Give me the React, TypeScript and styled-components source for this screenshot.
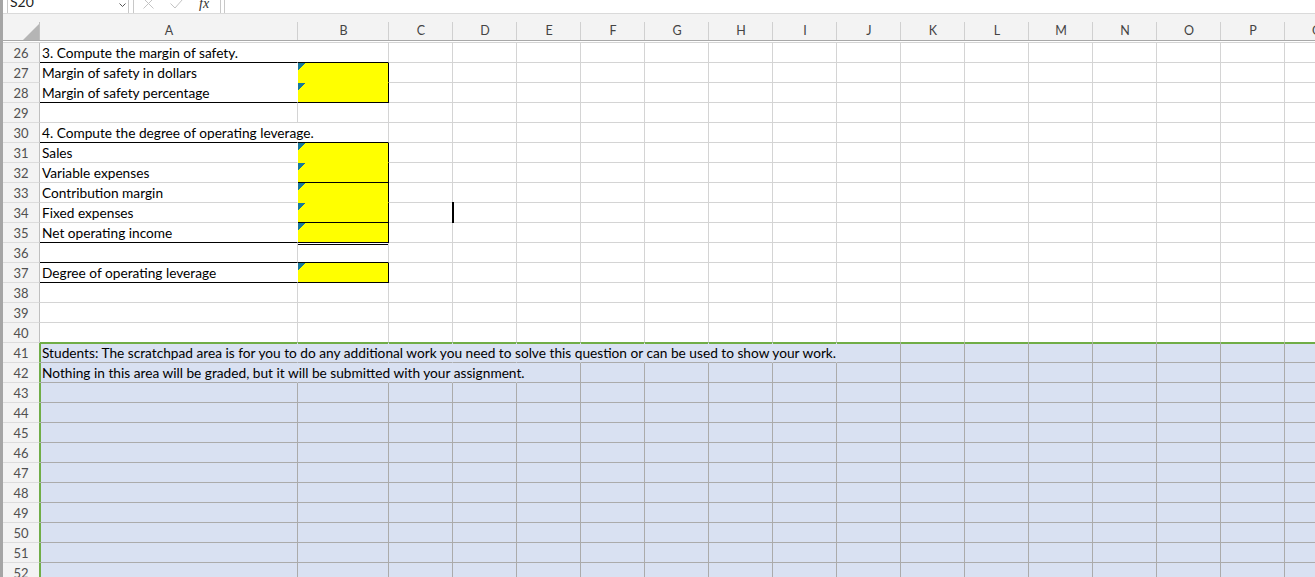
import React from 'react';
import styled, { createGlobalStyle, css } from 'styled-components';

const FONT = `Lato, "Liberation Sans", Arial, sans-serif`;

const C = {
  grid: '#d4d4d4',
  black: '#000000',
  scratch: '#ababab',
  green: '#70ad47',
  yellow: '#ffff00',
  blue: '#d9e1f2',
  white: '#ffffff',
  none: 'transparent',
  header: '#f3f3f3',
};

const GlobalStyle = createGlobalStyle`
  html, body { margin: 0; padding: 0; background: #ffffff; }
  body { font-family: ${FONT}; }
`;

const Window = styled.div`
  position: relative;
  width: 1315px;
  height: 577px;
  overflow: hidden;
  box-sizing: border-box;
  border-left: 3px solid #a5a5a5;
  background: #ffffff;
  font-family: ${FONT};
`;

/* ---------- formula bar ---------- */
const FormulaBar = styled.div`
  height: 14px;
  box-sizing: border-box;
  border-bottom: 1px solid #dadada;
  display: flex;
  align-items: flex-end;
  overflow: hidden;
`;

const BarBox = styled.div`
  height: 24px;
  flex: none;
  box-sizing: border-box;
  border: 1px solid #c8c8c8;
  border-bottom: none;
  display: flex;
`;

const NameBox = styled(BarBox)`
  margin-left: 4px;
  width: 122px;
  align-items: center;
  justify-content: space-between;
  padding: 0 2px 0 2px;
`;

const NameText = styled.span`
  font-size: 14px;
  line-height: 22px;
  color: #222222;
`;

const Chevron = styled.svg`
  margin-top: 6px;
`;

const FxButtons = styled(BarBox)`
  margin-left: 4px;
  width: 88px;
  align-items: flex-end;
  padding: 0 0 4px 9px;
  gap: 16px;
`;

const FxLabel = styled.span`
  font-family: "Liberation Serif", serif;
  font-style: italic;
  font-size: 14px;
  line-height: 12px;
  color: #333333;
  margin-bottom: -1px;
`;

const FormulaInput = styled(BarBox)`
  margin-left: 3px;
  flex: 1;
  border-right: none;
`;

/* ---------- column header ---------- */
const HeaderRow = styled.div`
  display: flex;
  height: 27px;
  box-sizing: border-box;
  background: ${C.header};
  border-bottom: 1px solid #a8a8a8;
`;

const Corner = styled.div`
  flex: none;
  width: 37px;
  height: 26px;
  box-sizing: border-box;
  display: flex;
  align-items: flex-end;
  justify-content: flex-end;
  padding-right: 1px;
  background: linear-gradient(#bfbfbf, #bfbfbf) right bottom / 1px 18px no-repeat;
`;

const ColHead = styled.div<{ $w: number }>`
  flex: none;
  width: ${(p) => p.$w}px;
  height: 26px;
  box-sizing: border-box;
  padding-top: 8px;
  text-align: center;
  font-size: 12.5px;
  line-height: 18px;
  color: #444444;
  background: linear-gradient(#d0d0d0, #d0d0d0) right bottom / 1px 18px no-repeat;
`;

const HeaderGap = styled.div`
  height: 2px;
  box-sizing: border-box;
  border-bottom: 1px solid ${C.grid};
`;

/* ---------- grid rows ---------- */
const Row = styled.div`
  display: flex;
  height: 20px;
`;

const RowHead = styled.div<{ $edge: string }>`
  flex: none;
  width: 37px;
  height: 20px;
  box-sizing: border-box;
  padding-top: 1px;
  background: ${C.header};
  border-right: 1px solid ${(p) => p.$edge};
  border-bottom: 1px solid #dcdcdc;
  text-align: center;
  font-size: 13px;
  line-height: 18px;
  color: #505050;
`;

type CellProps = {
  $w: number;
  $fill: string;
  $right: string;
  $bottom: string;
  $comment?: boolean;
  $doubleTop?: boolean;
  $greenTop?: boolean;
  $greenLeft?: boolean;
  $text?: boolean;
};

const Cell = styled.div<CellProps>`
  flex: none;
  width: ${(p) => p.$w}px;
  height: 20px;
  box-sizing: border-box;
  padding: 1px 0 0 2px;
  background-color: ${(p) => p.$fill};
  border-right: 1px solid ${(p) => p.$right};
  border-bottom: 1px solid ${(p) => p.$bottom};
  font-size: 13.7px;
  line-height: 18px;
  color: #000000;
  white-space: nowrap;
  ${(p) =>
    p.$text &&
    css`
      position: relative;
      z-index: 1;
    `}
  ${(p) =>
    p.$comment &&
    css`
      background-image: linear-gradient(135deg, #18799b 50%, transparent 50%);
      background-size: 8px 8px;
      background-repeat: no-repeat;
    `}
  ${(p) =>
    p.$doubleTop &&
    css`
      background-image: linear-gradient(
        to bottom,
        transparent 1px,
        #000000 1px,
        #000000 2px,
        transparent 2px
      );
    `}
  ${(p) => {
    const shadows: string[] = [];
    if (p.$greenTop) shadows.push(`inset 0 1px 0 ${C.green}`);
    if (p.$greenLeft) shadows.push(`inset 1px 0 0 ${C.green}`);
    return shadows.length ? css`box-shadow: ${shadows.join(', ')};` : '';
  }}
`;

const Cursor = styled.div`
  position: absolute;
  left: 449px;
  top: 202px;
  width: 2px;
  height: 21px;
  background: #000000;
`;

/* ---------- data ---------- */
const COLS = 'ABCDEFGHIJKLMNOPQ'.split('');
const widthOf = (i: number) => (i === 0 ? 258 : i === 1 ? 91 : 64);

type Spec = {
  fill: string;
  right: string;
  bottom: string;
  text?: string;
  comment?: boolean;
  doubleTop?: boolean;
  greenTop?: boolean;
  greenLeft?: boolean;
};

const Y = { fill: C.yellow, comment: true, right: C.black };

const BLOCK: Record<number, [Partial<Spec>, Partial<Spec>]> = {
  26: [{ text: '3. Compute the margin of safety.', right: C.none, bottom: C.black }, { bottom: C.black }],
  27: [{ text: 'Margin of safety in dollars', fill: C.white, right: C.white, bottom: C.white }, { ...Y, bottom: C.yellow }],
  28: [{ text: 'Margin of safety percentage', fill: C.white, right: C.white, bottom: C.black }, { ...Y, bottom: C.black }],
  30: [{ text: '4. Compute the degree of operating leverage.', right: C.none, bottom: C.black }, { bottom: C.black }],
  31: [{ text: 'Sales', fill: C.white, right: C.white }, { ...Y, bottom: C.yellow }],
  32: [{ text: 'Variable expenses', fill: C.white, right: C.white }, { ...Y, bottom: C.black }],
  33: [{ text: 'Contribution margin', fill: C.white, right: C.white }, { ...Y, bottom: C.yellow }],
  34: [{ text: 'Fixed expenses', fill: C.white, right: C.white }, { ...Y, bottom: C.black }],
  35: [{ text: 'Net operating income', fill: C.white, right: C.white, bottom: C.black }, { ...Y, bottom: C.black }],
  36: [{ bottom: C.black }, { bottom: C.black, doubleTop: true }],
  37: [{ text: 'Degree of operating leverage', fill: C.white, right: C.white, bottom: C.black }, { ...Y, bottom: C.black }],
  41: [{ text: 'Students: The scratchpad area is for you to do any additional work you need to solve this question or can be used to show your work.' }, {}],
  42: [{ text: 'Nothing in this area will be graded, but it will be submitted with your assignment.' }, {}],
};

function specFor(row: number, col: number): Spec {
  const scratch = row >= 41;
  const s: Spec = scratch
    ? { fill: C.blue, right: C.scratch, bottom: C.scratch }
    : { fill: C.none, right: C.grid, bottom: C.grid };
  if (row === 40) s.bottom = C.green;
  if (row === 41) {
    s.greenTop = true;
    if (col <= 8) s.right = C.blue;
  }
  if (row === 42 && col <= 3) s.right = C.blue;
  if (scratch && col === 0) s.greenLeft = true;
  const block = BLOCK[row];
  if (block && col <= 1) Object.assign(s, block[col]);
  return s;
}

const ROWS = Array.from({ length: 27 }, (_, i) => 26 + i);

const XIcon = () => (
  <svg width="11" height="11" viewBox="0 0 11 11">
    <path d="M0.5 0.5 L10.5 10.5 M10.5 0.5 L0.5 10.5" stroke="#c3c3c3" strokeWidth="1" fill="none" />
  </svg>
);

const CheckIcon = () => (
  <svg width="13" height="10" viewBox="0 0 13 10">
    <path d="M0.5 4.5 L5 9 L12.5 0.5" stroke="#c3c3c3" strokeWidth="1" fill="none" />
  </svg>
);

export default function App() {
  return (
    <>
      <GlobalStyle />
      <Window>
        <FormulaBar>
          <NameBox>
            <NameText>S20</NameText>
            <Chevron width="7" height="4" viewBox="0 0 7 4">
              <path d="M0.5 0.5 L3.5 3.5 L6.5 0.5" stroke="#555555" strokeWidth="1" fill="none" />
            </Chevron>
          </NameBox>
          <FxButtons>
            <XIcon />
            <CheckIcon />
            <FxLabel>fx</FxLabel>
          </FxButtons>
          <FormulaInput />
        </FormulaBar>

        <HeaderRow>
          <Corner>
            <svg width="16" height="16" viewBox="0 0 16 16">
              <polygon points="0,16 16,16 16,0" fill="#b5b5b5" />
            </svg>
          </Corner>
          {COLS.map((c, i) => (
            <ColHead key={c} $w={widthOf(i)}>
              {c}
            </ColHead>
          ))}
        </HeaderRow>
        <HeaderGap />

        {ROWS.map((r) => (
          <Row key={r}>
            <RowHead $edge={r >= 41 ? C.green : '#bfbfbf'}>{r}</RowHead>
            {COLS.map((c, i) => {
              const s = specFor(r, i);
              return (
                <Cell
                  key={c}
                  $w={widthOf(i)}
                  $fill={s.fill}
                  $right={s.right}
                  $bottom={s.bottom}
                  $comment={s.comment}
                  $doubleTop={s.doubleTop}
                  $greenTop={s.greenTop}
                  $greenLeft={s.greenLeft}
                  $text={!!s.text}
                >
                  {s.text}
                </Cell>
              );
            })}
          </Row>
        ))}
        <Cursor />
      </Window>
    </>
  );
}
